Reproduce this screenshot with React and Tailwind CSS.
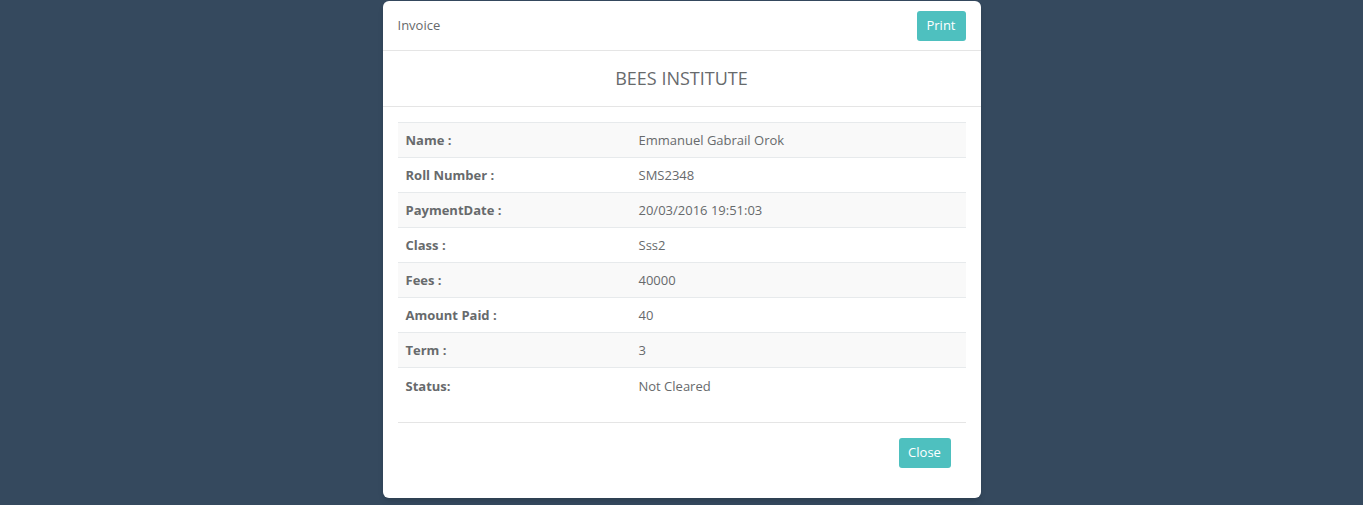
import React from 'react';

const rows = [
    { label: 'Name :', value: 'Emmanuel Gabrail Orok' },
    { label: 'Roll Number :', value: 'SMS2348' },
    { label: 'PaymentDate :', value: '20/03/2016 19:51:03' },
    { label: 'Class :', value: 'Sss2' },
    { label: 'Fees :', value: '40000' },
    { label: 'Amount Paid :', value: '40' },
    { label: 'Term :', value: '3' },
    { label: 'Status:', value: 'Not Cleared' },
];

const App = () => {
    return (
        <div className="min-h-[505px] bg-[#35495e] pt-px font-['Open_Sans',sans-serif] text-[13px] text-[#676a6c]">
            <div className="mx-auto w-[598px] bg-white rounded-md shadow-md">
                <div className="flex items-center justify-between pl-[15px] pr-[15px] pt-[10px] pb-[9px] border-b border-[#e5e5e5]">
                    <span className="leading-[30px] -mt-[2px]">Invoice</span>
                    <button className="h-[30px] w-[49px] rounded-[3px] bg-[#4ec0bf] text-white text-[13px]">Print</button>
                </div>
                <div className="h-[56px] flex items-center justify-center border-b border-[#e5e5e5]">
                    <h2 className="text-[18px] leading-[25px] text-[#676a6c] -mt-px">BEES INSTITUTE</h2>
                </div>
                <div className="px-[15px] pt-[15px]">
                    <table className="w-full mb-[19px] border-collapse">
                        <tbody>
                            {rows.map((row, idx) => (
                                <tr key={idx} className={idx % 2 === 0 ? 'bg-[#f9f9f9]' : ''}>
                                    <td className="w-[233px] h-[35px] px-2 pt-[2px] border-t border-[#e7eaec] font-bold">{row.label}</td>
                                    <td className="h-[35px] px-2 pt-[2px] border-t border-[#e7eaec]">{row.value}</td>
                                </tr>
                            ))}
                        </tbody>
                    </table>
                </div>
                <div className="mx-[15px] border-t border-[#e5e5e5] pt-[15px] pb-[30px] flex justify-end pr-[15px]">
                    <button className="h-[30px] w-[52px] rounded-[3px] bg-[#4ec0bf] text-white text-[13px]">Close</button>
                </div>
            </div>
        </div>
    );
};

export default App;
